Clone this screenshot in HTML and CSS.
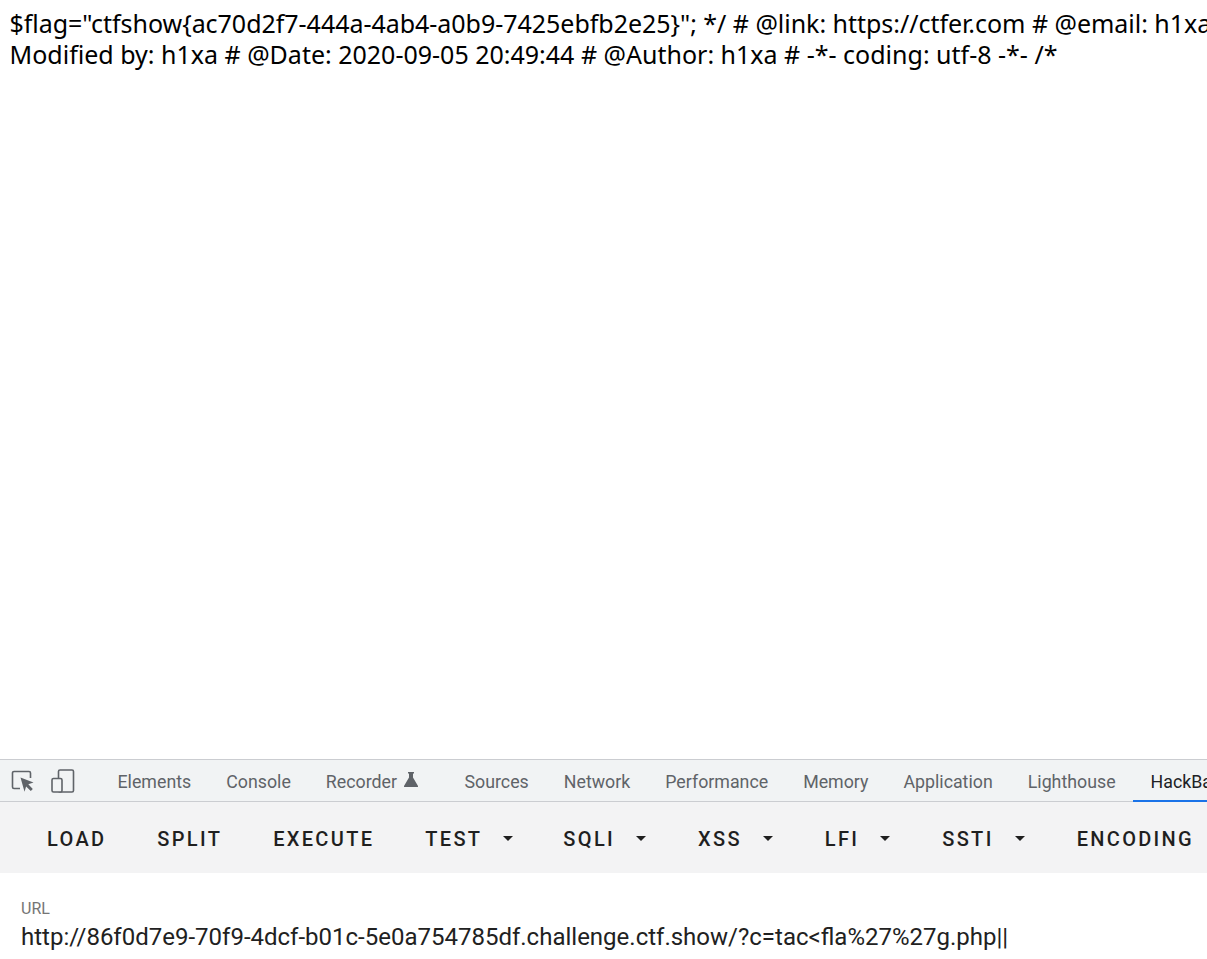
FILE: index.html
```html
<!DOCTYPE html>
<html lang="en">
<head>
    <meta charset="UTF-8">
    <meta name="viewport" content="width=device-width, initial-scale=1.0">
    <title>ctf.show</title>
    <link rel="stylesheet" href="styles.css">
</head>
<body>

    <div class="page-output">
        <div class="line first">$flag="ctfshow{ac70d2f7-444a-4ab4-a0b9-7425ebfb2e25}"; */ # @link: https://ctfer.com # @email: h1xa</div>
        <div class="line">Modified by: h1xa # @Date: 2020-09-05 20:49:44 # @Author: h1xa # -*- coding: utf-8 -*- /*</div>
    </div>

    <div class="devtools">
        <div class="tabbar">
            <div class="tool-icons">
                <svg class="tool-icon" width="24" height="24" viewBox="0 0 24 24" fill="none">
                    <path d="M9 19.5H3a1.5 1.5 0 0 1-1.5-1.500V4A1.500 1.500 0 0 1 3 2.500h15A1.500 1.500 0 0 1 19.500 4v5" stroke="#5f6368" stroke-width="1.600"/>
                    <path d="M9.500 8.500l13 5-5.200 1.800 4.500 4.700-2 2-4.700-4.600-1.600 5.300z" fill="#5f6368"/>
                </svg>
                <svg class="tool-icon" width="24" height="24" viewBox="0 0 24 24" fill="none">
                    <rect x="7.500" y="1" width="15" height="22" rx="1.500" stroke="#5f6368" stroke-width="1.600"/>
                    <rect x="1" y="9.500" width="10" height="13.500" rx="1.500" fill="#f1f3f4" stroke="#5f6368" stroke-width="1.600"/>
                </svg>
            </div>
            <div class="tab-sep"></div>
            <div class="tab">Elements</div>
            <div class="tab">Console</div>
            <div class="tab recorder">Recorder
                <svg class="flask" width="14" height="15" viewBox="0 0 14 15"><path d="M4 0h6v1.500H9v4l5 8.500a.7.7 0 0 1-.6 1H.6a.7.7 0 0 1-.6-1l5-8.500v-4H4z" fill="#5f6368"/></svg>
            </div>
            <div class="tab">Sources</div>
            <div class="tab">Network</div>
            <div class="tab">Performance</div>
            <div class="tab">Memory</div>
            <div class="tab">Application</div>
            <div class="tab">Lighthouse</div>
            <div class="tab active">HackBar</div>
        </div>

        <div class="toolbar">
            <div class="btn">LOAD</div>
            <div class="btn">SPLIT</div>
            <div class="btn">EXECUTE</div>
            <div class="btn">TEST<span class="caret"></span></div>
            <div class="bar-sep"></div>
            <div class="btn">SQLI<span class="caret"></span></div>
            <div class="btn">XSS<span class="caret"></span></div>
            <div class="btn">LFI<span class="caret"></span></div>
            <div class="btn">SSTI<span class="caret"></span></div>
            <div class="btn">ENCODING</div>
        </div>

        <div class="url-field">
            <div class="url-label">URL</div>
            <div class="url-value">http://86f0d7e9-70f9-4dcf-b01c-5e0a754785df.challenge.ctf.show/?c=tac&lt;fla%27%27g.php||</div>
        </div>
    </div>

</body>
</html>
```

FILE: styles.css
```css
body {
    margin: 0;
    height: 100vh;
    overflow: hidden;
    display: flex;
    flex-direction: column;
    background: #ffffff;
    font-family: Roboto, sans-serif;
}

/* Page text */
.page-output {
    flex: 1;
    padding: 8px 0 0 9.500px;
    font-family: "Noto Sans", sans-serif;
    font-size: 25px;
    line-height: 31px;
    color: #000000;
    overflow: hidden;
}

.line {
    white-space: nowrap;
}

.line.first {
    letter-spacing: -0.030px;
}

/* Devtools tab strip */
.devtools {
    height: 200px;
    flex-shrink: 0;
    overflow: hidden;
}

.tabbar {
    display: flex;
    align-items: center;
    height: 41px;
    background: #f1f3f4;
    border-top: 1px solid #cbcdd1;
    border-bottom: 1px solid #cbcdd1;
    font-size: 17.800px;
    color: #5f6368;
    white-space: nowrap;
}

.tool-icons {
    display: flex;
    align-items: center;
    gap: 16px;
    padding-left: 11px;
}

.tab-sep {
    width: 2px;
    height: 24px;
    margin: 0 10px 0 15px;
    background: #cbcdd1;
}

.tab {
    display: flex;
    align-items: center;
    height: 100%;
    padding: 2px 17.500px 0;
    box-sizing: border-box;
}

.tab.recorder {
    padding-right: 29px;
}

.tab.active {
    color: #202124;
    border-bottom: 2px solid #1a73e8;
    margin-bottom: -1px;
}

.flask {
    margin-left: 7px;
    margin-top: -4px;
}

/* HackBar buttons */
.toolbar {
    display: flex;
    align-items: center;
    height: 71px;
    padding: 2px 0 0 31px;
    box-sizing: border-box;
    background: #f3f3f4;
    white-space: nowrap;
}

.btn {
    display: flex;
    align-items: center;
    padding: 0 16px;
    margin-right: 19px;
    font-size: 20px;
    font-weight: 500;
    letter-spacing: 2.320px;
    color: #1f1f1f;
}

.caret {
    width: 0;
    height: 0;
    margin: 0 1px 0 21px;
    border-left: 5px solid transparent;
    border-right: 5px solid transparent;
    border-top: 5px solid #1f1f1f;
}

.bar-sep {
    width: 1px;
    height: 48px;
    margin: 0 8px 0 -10px;
    background: #d0d0d0;
}

/* URL field */
.url-field {
    padding: 26px 21px 0;
}

.url-label {
    font-size: 16px;
    line-height: 19px;
    color: #757575;
}

.url-value {
    margin-top: 5px;
    font-size: 24px;
    line-height: 29px;
    color: #212121;
    white-space: nowrap;
}
```
